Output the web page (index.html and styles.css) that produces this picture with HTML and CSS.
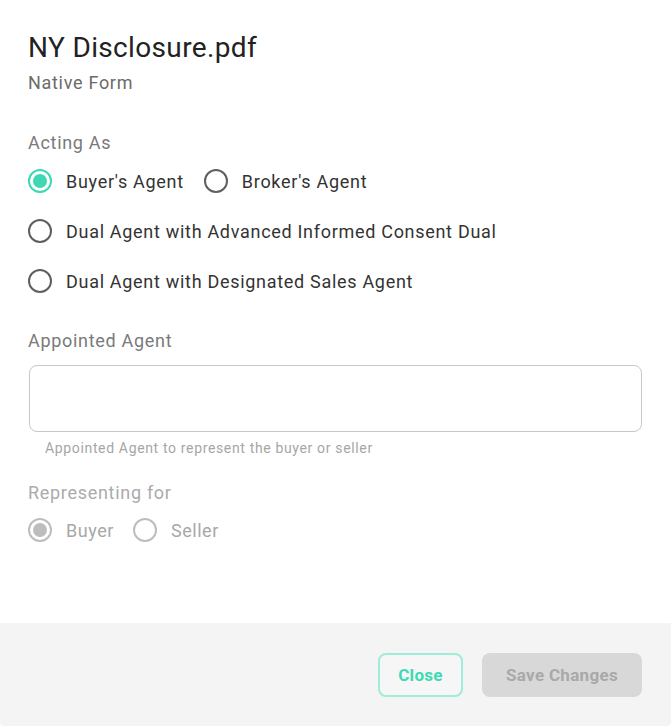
FILE: index.html
```html
<!DOCTYPE html>
<html>
<head>
<meta charset="utf-8">
<link rel="stylesheet" href="styles.css">
</head>
<body>
<div class="dialog">
  <div class="content">
    <h1 class="title">NY Disclosure.pdf</h1>
    <div class="subtitle">Native Form</div>

    <div class="label acting">Acting As</div>
    <div class="radio-row">
      <label class="radio checked"><span class="circle"></span><span class="text">Buyer's Agent</span></label>
      <label class="radio"><span class="circle"></span><span class="text">Broker's Agent</span></label>
    </div>
    <div class="radio-row">
      <label class="radio"><span class="circle"></span><span class="text">Dual Agent with Advanced Informed Consent Dual</span></label>
    </div>
    <div class="radio-row">
      <label class="radio"><span class="circle"></span><span class="text">Dual Agent with Designated Sales Agent</span></label>
    </div>

    <div class="label appointed">Appointed Agent</div>
    <div class="input"></div>
    <div class="helper">Appointed Agent to represent the buyer or seller</div>

    <div class="label disabled representing">Representing for</div>
    <div class="radio-row disabled">
      <label class="radio checked"><span class="circle"></span><span class="text">Buyer</span></label>
      <label class="radio"><span class="circle"></span><span class="text">Seller</span></label>
    </div>
  </div>
  <div class="footer">
    <button class="btn btn-close">Close</button>
    <button class="btn btn-save">Save Changes</button>
  </div>
</div>
</body>
</html>
```

FILE: styles.css
```css
html, body {
  margin: 0;
  padding: 0;
  background: #ffffff;
}
body {
  font-family: Roboto, "Liberation Sans", sans-serif;
  width: 671px;
  height: 726px;
  overflow: hidden;
}
.dialog {
  width: 671px;
  height: 726px;
  display: flex;
  flex-direction: column;
  background: #fff;
  border-radius: 4px;
  overflow: hidden;
}
.content {
  flex: 1;
  padding: 31px 29px 0 28px;
}
.title {
  margin: 0;
  font-size: 28px;
  font-weight: 400;
  line-height: 34px;
  letter-spacing: 0.35px;
  color: #222;
}
.subtitle {
  margin-top: 6px;
  font-size: 18px;
  line-height: 24px;
  letter-spacing: 0.7px;
  color: #6b6b6b;
}
.label {
  font-size: 18px;
  line-height: 24px;
  letter-spacing: 0.7px;
  color: #7a7a7a;
}
.label.acting { margin-top: 36px; margin-bottom: 14px; }
.label.appointed { margin-top: 36px; margin-bottom: 12px; }
.label.disabled { color: #ababab; }
.label.representing { margin-top: 24px; margin-bottom: 13px; }

.radio-row {
  display: flex;
  gap: 20px;
  height: 24px;
  align-items: center;
}
.radio-row.disabled { gap: 19px; }
.radio-row + .radio-row { margin-top: 26px; }
.radio {
  display: flex;
  align-items: center;
  gap: 14px;
  font-size: 18px;
  letter-spacing: 0.7px;
  color: #333;
}
.radio-row.disabled .radio { letter-spacing: 0.55px; }
.circle {
  width: 24px;
  height: 24px;
  box-sizing: border-box;
  border: 2px solid #5f5f5f;
  border-radius: 50%;
  display: flex;
  align-items: center;
  justify-content: center;
}
.radio.checked .circle { border-color: #3ed8b4; }
.radio.checked .circle::after {
  content: "";
  width: 14px;
  height: 14px;
  border-radius: 50%;
  background: #3ed8b4;
}
.radio-row.disabled .circle { border-color: #bdbdbd; }
.radio-row.disabled .radio.checked .circle::after { background: #bdbdbd; }
.radio-row.disabled .radio { color: #a8a8a8; }

.input {
  box-sizing: border-box;
  height: 67px;
  margin-left: 1px;
  border: 1px solid #c8c8c8;
  border-radius: 8px;
}
.helper {
  margin-top: 7px;
  padding-left: 17px;
  font-size: 14px;
  line-height: 18px;
  letter-spacing: 0.65px;
  color: #a6a6a6;
}

.footer {
  height: 103px;
  box-sizing: border-box;
  background: #f4f4f4;
  display: flex;
  justify-content: flex-end;
  align-items: flex-start;
  gap: 19px;
  padding: 30px 29px 0 0;
}
.btn {
  font-family: Roboto, "Liberation Sans", sans-serif;
  font-size: 17px;
  font-weight: 700;
  letter-spacing: 0.3px;
  height: 44px;
  border-radius: 8px;
  box-sizing: border-box;
  cursor: pointer;
}
.btn-close {
  width: 85px;
  background: #f6f6f6;
  border: 2px solid #9eecd9;
  color: #3ddbb3;
}
.btn-save {
  width: 160px;
  background: #d8d8d8;
  border: none;
  color: #a9a9a9;
}
```
